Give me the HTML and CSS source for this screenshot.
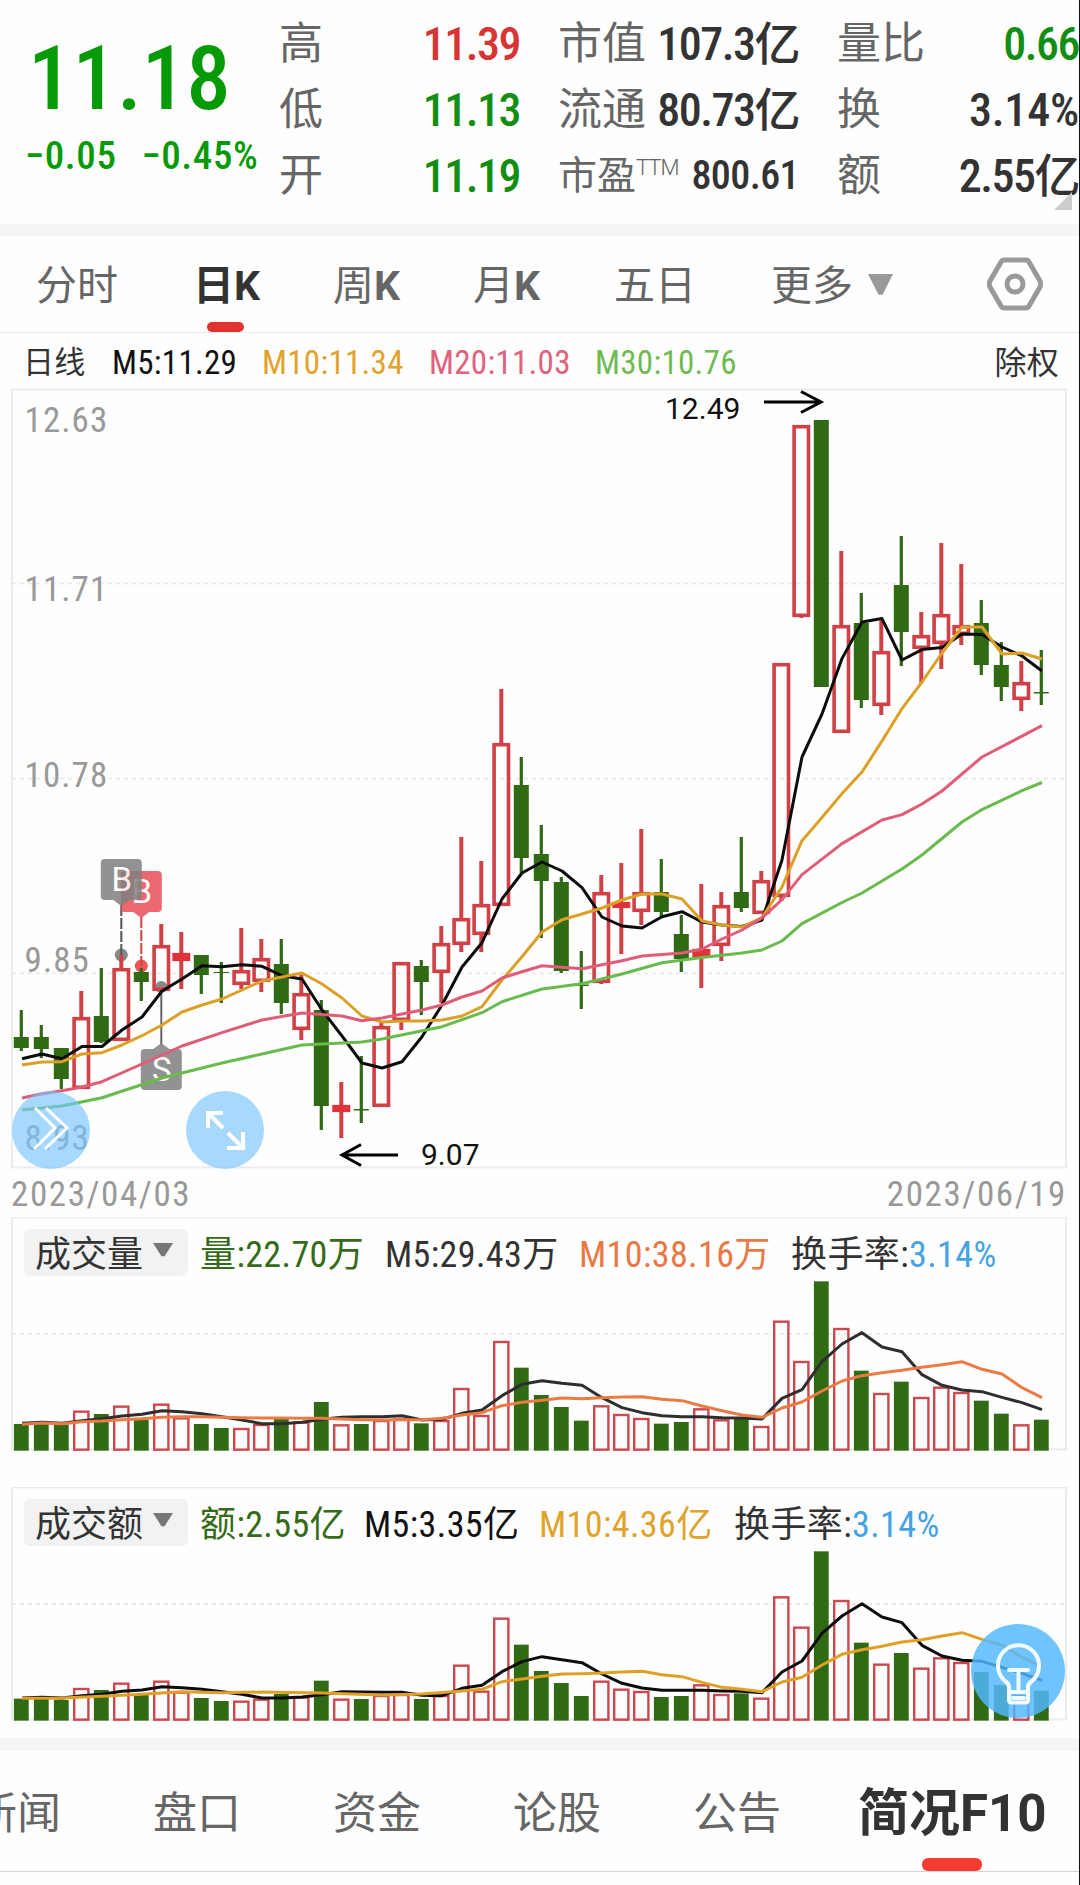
FILE: index.html
```html
<!DOCTYPE html>
<html lang="zh-CN">
<head>
<meta charset="utf-8">
<title>日K</title>
<link rel="stylesheet" href="styles.css">
</head>
<body>
<main class="screen">
  <header class="quote">
    <div class="price">
      <div class="price-now">11.18</div>
      <div class="price-change"><span>−0.05</span><span>−0.45%</span></div>
    </div>
    <dl class="stats">
      <div class="stat"><dt>高</dt><dd class="up">11.39</dd></div>
      <div class="stat"><dt>市值</dt><dd>107.3亿</dd></div>
      <div class="stat"><dt>量比</dt><dd class="down">0.66</dd></div>
      <div class="stat"><dt>低</dt><dd class="down">11.13</dd></div>
      <div class="stat"><dt>流通</dt><dd>80.73亿</dd></div>
      <div class="stat"><dt>换</dt><dd class="percent">3.14%</dd></div>
      <div class="stat"><dt>开</dt><dd class="down">11.19</dd></div>
      <div class="stat stat-small"><dt>市盈<sup>TTM</sup></dt><dd>800.61</dd></div>
      <div class="stat"><dt>额</dt><dd>2.55亿</dd></div>
    </dl>
    <i class="corner"></i>
  </header>

  <nav class="periods">
    <span class="period">分时</span>
    <span class="period active">日K</span>
    <span class="period">周<b>K</b></span>
    <span class="period">月<b>K</b></span>
    <span class="period">五日</span>
    <span class="period more">更多<i class="caret"></i></span>
    <svg class="settings" viewBox="0 0 56 54"><path d="M17 3H39Q41 3 42 5L53 24Q54.500 27 53 30L42 49Q41 51 39 51H17Q15 51 14 49L3 30Q1.500 27 3 24L14 5Q15 3 17 3Z"/><circle cx="28" cy="27" r="8"/></svg>
  </nav>

  <div class="legend">
    <span class="l-name">日线</span>
    <span class="l-m5">M5:11.29</span>
    <span class="l-m10">M10:11.34</span>
    <span class="l-m20">M20:11.03</span>
    <span class="l-m30">M30:10.76</span>
    <span class="l-adj">除权</span>
  </div>

  <section class="kline">
    <svg id="kline" viewBox="11 388 1056 781"></svg>
    <button class="round collapse"><svg viewBox="0 0 78 78"><path d="M23 17 43 37 22 58M34 17 55 37 33 58"/></svg></button>
    <button class="round expand"><svg viewBox="0 0 78 78"><path d="M37 37 22 22M37 22H22V37M42 42 57 57M41 57H57V41"/></svg></button>
  </section>
  <div class="dates"><span>2023/04/03</span><span>2023/06/19</span></div>

  <section class="panel">
    <div class="panel-head">
      <span class="pick">成交量<i class="caret"></i></span>
      <span class="v-now">量:22.70万</span>
      <span class="v-m5">M5:29.43万</span>
      <span class="v-m10">M10:38.16万</span>
      <span class="v-rate">换手率:<em>3.14%</em></span>
    </div>
    <svg id="volume" viewBox="11 1217 1056 234"></svg>
  </section>

  <section class="panel amount">
    <div class="panel-head">
      <span class="pick">成交额<i class="caret"></i></span>
      <span class="v-now">额:2.55亿</span>
      <span class="v-m5">M5:3.35亿</span>
      <span class="v-m10">M10:4.36亿</span>
      <span class="v-rate">换手率:<em>3.14%</em></span>
    </div>
    <svg id="amount" viewBox="11 1487 1056 234"></svg>
    <button class="bulb"><svg viewBox="0 0 94 94"><path d="M38 76V63Q38 60 34.500 57.500A20.500 20.500 0 1 1 60.500 57.500Q57 60 57 63V76Q57 78.500 54.500 78.500H40.500Q38 78.500 38 76M40 68H55M42 74H53M38 46H57M47.500 47V67"/></svg></button>
  </section>

  <nav class="sections">
    <span>新闻</span><span>盘口</span><span>资金</span><span>论股</span><span>公告</span><span class="active">简况F10</span>
  </nav>
</main>
<script src="chart.js"></script>
</body>
</html>
```
FILE: styles.css
```css
* { box-sizing: border-box; }
body { margin: 0; background: #fefefe; }
.screen {
  position: relative;
  width: 1080px;
  height: 1885px;
  overflow: hidden;
  border-right: 1px solid #111;
  background: #fefefe;
  color: #333;
  font-family: Roboto, "Noto Sans CJK SC", sans-serif;
  white-space: nowrap;
}
svg { display: block; }
button { border: 0; padding: 0; }

/* quote header */
.quote {
  position: relative;
  display: flex;
  height: 236px;
  border-bottom: 12px solid #f5f5f5;
}
.price { width: 279px; color: #079a07; }
.price-now {
  height: 96px;
  margin: 31px 0 0 28px;
  font-size: 89px;
  line-height: 96px;
  font-weight: 500;
  font-stretch: 75%;
}
.price-change {
  display: flex;
  gap: 25px;
  margin: 5px 0 0 25px;
  font-size: 39px;
  line-height: 48px;
  font-weight: 500;
  font-stretch: 75%;
  letter-spacing: .6px;
}
.stats {
  display: grid;
  grid-template-columns: 241px 241px 242px;
  grid-template-rows: repeat(3, 66px);
  column-gap: 38px;
  align-content: start;
  margin: 11px 0 0;
}
.stat { display: flex; justify-content: space-between; align-items: center; line-height: 66px; }
.stat dt { font-size: 44px; color: #666; }
.stat dd { margin: 0; font-size: 46px; font-weight: 500; font-stretch: 75%; letter-spacing: -1.5px; }
.stat dd.percent { letter-spacing: -.2px; }
.stat-small dt { font-size: 39px; }
.stat-small dd { font-size: 40px; letter-spacing: -.6px; }
.stat sup { font-size: 22px; line-height: 0; vertical-align: 14px; font-weight: 300; letter-spacing: -1px; }
.up { color: #d93434; }
.down { color: #128f12; }
.corner {
  position: absolute;
  right: 7px;
  bottom: 14px;
  border: 9px solid #ccc;
  border-left-color: transparent;
  border-top-color: transparent;
}
.caret { display: inline-block; background: #999; clip-path: polygon(0 0, 100% 0, 58% 94%, 42% 94%); }

/* period tabs */
.periods {
  display: flex;
  align-items: center;
  height: 97px;
  padding-left: 36px;
  border-bottom: 1px solid #e9e9e9;
  color: #666;
  font-size: 41px;
}
.period { width: 140px; height: 96px; line-height: 100px; }
.period:nth-child(1) { width: 157px; }
.period:nth-child(2) { width: 140px; }
.period b, .period.active { font-weight: 700; }
.period.active { position: relative; color: #333; }
.period.active::after {
  content: "";
  position: absolute;
  left: 14px;
  bottom: 0;
  width: 37px;
  height: 10px;
  border-radius: 5px;
  background: #e03330;
}
.period:nth-child(4) { width: 141px; }
.period:nth-child(5) { width: 157px; }
.more { width: 216px; }
.more .caret { width: 25px; height: 22px; margin: 0 0 4px 15px; }
.settings { width: 56px; height: 54px; fill: none; stroke: #999; stroke-width: 5; }

/* moving-average legend */
.legend {
  display: flex;
  height: 55px;
  padding-left: 23px;
  font-size: 33px;
  line-height: 60px;
  font-stretch: 75%;
  letter-spacing: .3px;
}
.l-name { width: 89px; font-size: 31px; }
.l-m5 { width: 150px; color: #111; }
.l-m10 { width: 167px; color: #e0a32c; }
.l-m20 { width: 166px; color: #e2617d; }
.l-m30 { color: #6fbb52; }
.l-adj { margin: 0 20px 0 auto; font-size: 32px; }

.kline { position: relative; height: 781px; padding-left: 11px; }
#kline { width: 1056px; height: 781px; }
.axis { font-size: 35px; font-stretch: 75%; letter-spacing: 1.1px; fill: #999; }
.round {
  position: absolute;
  top: 703px;
  width: 78px;
  height: 78px;
  border-radius: 50%;
  background: rgba(120, 196, 255, .65);
}
.round path { fill: none; stroke: #fff; stroke-width: 3; }
.collapse { left: 12px; }
.expand { left: 186px; }
.expand path { stroke-width: 4; }

.dates {
  display: flex;
  justify-content: space-between;
  height: 48px;
  padding: 0 12px 0 11px;
  color: #999;
  font-size: 35px;
  line-height: 51px;
  font-stretch: 75%;
  letter-spacing: 1.6px;
}

/* volume and amount panels */
.panel { position: relative; height: 270px; padding-left: 11px; }
.panel > svg { width: 1056px; height: 234px; margin-top: -59px; }
.panel-head {
  display: flex;
  height: 59px;
  padding: 12px 0 0 13px;
  font-size: 36px;
  line-height: 52px;
  font-stretch: 75%;
  letter-spacing: .4px;
}
.pick { width: 164px; height: 47px; padding-left: 11px; border-radius: 6px; background: #f2f2f2; letter-spacing: 0; }
.pick .caret { width: 20px; height: 14px; margin: 0 0 10px 10px; background: #777; }
.v-now { width: 185px; padding-left: 12px; color: #356b18; }
.v-m5 { width: 194px; margin-left: 12px; }
.v-m10 { width: 212px; color: #e97845; }
.v-rate em { color: #45a3e5; font-style: normal; }
.amount { height: 251px; }
.amount .v-now { width: 164px; }
.amount .v-m5 { width: 175px; color: #111; }
.amount .v-m10 { width: 195px; color: #e0a32c; }
.bulb {
  position: absolute;
  left: 971px;
  top: 137px;
  width: 94px;
  height: 94px;
  border-radius: 50%;
  background: rgba(82, 184, 255, .83);
}
.bulb path { fill: none; stroke: #f0faff; stroke-width: 4; stroke-linecap: round; }

/* bottom section tabs */
.sections {
  display: flex;
  height: 134px;
  border-top: 13px solid #f5f5f5;
  border-bottom: 1px solid #d5d5d5;
  color: #666;
  font-size: 44px;
  line-height: 126px;
}
.sections span { width: 180px; height: 120px; flex: none; }
.sections span:first-child { margin-left: -27px; }
.sections .active {
  position: relative;
  width: auto;
  margin-left: -15px;
  color: #333;
  font-size: 51px;
  font-weight: 700;
}
.sections .active::after {
  content: "";
  position: absolute;
  left: 64px;
  bottom: 0;
  width: 60px;
  height: 13px;
  border-radius: 6px;
  background: #f43c30;
}
```
FILE: chart.js
```js
const NS = 'http://www.w3.org/2000/svg';
const RED = '#cf4146', GREEN = '#316a15';
const x = i => 21.300 + 20 * i;

function add(svg, tag, attrs, text) {
  const el = document.createElementNS(NS, tag);
  for (const k in attrs) el.setAttribute(k, attrs[k]);
  if (text) el.textContent = text;
  svg.appendChild(el);
  return el;
}
function frame(svg, top, bottom, grid) {
  add(svg, 'rect', { x: 12, y: top, width: 1054, height: bottom - top, fill: 'none', stroke: '#ebebeb', 'stroke-width': 2 });
  grid.forEach(y => add(svg, 'path', { d: `M12 ${y}H1066`, stroke: '#ebebeb', 'stroke-width': 2, 'stroke-dasharray': '4 4' }));
}
// Each point is [index, y]; a bare number takes its place in the list as index.
function line(svg, pts, color, map = y => y) {
  const d = pts.map((p, i) => Array.isArray(p) ? p : [i, p]).map(([i, y]) => `${x(i) + 0.700},${map(y)}`).join(' ');
  add(svg, 'polyline', { points: d, fill: 'none', stroke: color, 'stroke-width': 3, 'stroke-linejoin': 'round' });
}

// Candles: direction, high, body top, body bottom, low (chart coordinates).
const candles = `G 1010 1037 1048 1051|G 1025 1037 1049 1058|G 1048 1048 1079 1089|R 991 1017 1089 1089|G 968 1016 1042 1043|R 955 968 1041 1041|G 968 972 982 1001|R 924 945 991 991|R 932 953 961 989|G 955 955 975 994|G 962 972 973 1003|R 928 970 985 989|R 939 958 982 992|G 939 964 1003 1014|R 975 993 1030 1040|G 1000 1010 1106 1130|R 1082 1105 1112 1138|G 1056 1109 1110.500 1123|R 1022 1026 1107 1107|R 962 962 1021 1030|G 960 966 982 1015|R 926 943 973 1003|R 837 918 945 952|R 861 904 935 952|R 689 743 906 906|G 757 785 858 873|G 825 854 881 938|G 877 882 971 973|G 951 984.500 986 1009|R 875 892 983 984|R 863 902 908 954|R 829 892 912 925|G 859 892 912 917|G 915 934 959 972|R 884 949 957 988|R 892 905 946 961|G 837 892 908 912|R 871 880 914 914|R 663 663 897 901|R 425 425 617 618|G 420 420 687 687|R 551 625 733 733|G 593 623 700 708|R 619 651 706 715|G 536 585 632 666|R 612 635 649 683|R 543 614 644 669|R 564 625 635 645|G 600 623 665 675|G 642 665 687 701|R 661 682 700 711|G 650 692 693.500 705`
  .split('|').map(s => s.split(' '));

const ma5 = [1058.700,1054,1058.700,1046.500,1046.500,1030,1017,991,979,965.700,966.700,964.700,966.300,975.700,979,1010,1036,1063,1068,1061.700,1036.700,1005,967,942.700,899,873,862,871,887.700,917,926,928,916.700,911.700,922,925,926.500,920,860,757,714,658.600,622,618.600,660,649.600,647.500,634,634.600,647,656,671];
const ma10 = [1065,1062,1061.700,1054,1052.700,1045,1035.700,1025,1012,1005,999,990,981,977,973,984,998,1016,1022,1021,1021,1020,1016,1006.700,980,956.700,932,919.700,914,908,900,894,894,899,921,925,927,917.500,887,840.700,817.500,793.600,772,741,708.600,682,653,627,627,654,653,659];
const ma20 = [[0,1098],[1,1093.700],[2,1090.700],[3,1087],[4,1081.700],[6,1064],[8,1046],[10,1032.700],[12,1020],[14,1013],[16,1016],[17,1020.700],[18,1018],[20,1010],[21,1005],[22,997],[23,991],[24,978],[25,971.700],[26,965.700],[28,968.700],[30,960.700],[31,956],[33,953],[34,949],[35,939],[36,930],[37,918],[38,899.600],[39,874.600],[41,843.600],[43,820],[44,814.600],[45,804],[46,791],[48,757],[51,725.700]];
const ma30 = [[0,1110],[2,1106],[4,1097.700],[7,1078],[10,1063],[12,1054],[14,1045],[17,1042],[18,1039],[21,1026.700],[23,1012.700],[24,1001.700],[26,989],[28,983.700],[30,974],[32,962.700],[34,957.600],[36,953],[37,950],[38,941],[39,923.600],[41,902.500],[42,893],[44,869],[45,855],[47,822],[48,809.600],[50,790.700],[51,782.500]];

const k = document.getElementById('kline');
frame(k, 389.500, 1167.500, [583.500, 778.500, 973.500]);
[['12.63', 432], ['11.71', 601], ['10.78', 787], ['9.85', 972], ['8.93', 1150]].forEach(([t, y]) =>
  add(k, 'text', { x: 24.500, y, class: 'axis' }, t));

add(k, 'circle', { cx: 121.300, cy: 955, r: 6.500, fill: '#888' });
add(k, 'circle', { cx: 141.300, cy: 966, r: 6.500, fill: '#e55' });
add(k, 'circle', { cx: 161.300, cy: 987, r: 6, fill: '#888' });
candles.forEach(([dir, hi, top, bot, lo], i) => {
  [hi, top, bot, lo] = [hi, top, bot, lo].map(Number);
  const c = x(i);
  if (dir === 'G') {
    add(k, 'path', { d: `M${c} ${hi}V${lo}`, stroke: GREEN, 'stroke-width': 3.200 });
    add(k, 'rect', { x: c - 7.500, y: top, width: 15, height: bot - top, fill: GREEN });
  } else {
    add(k, 'path', { d: `M${c} ${hi}V${top}M${c} ${bot}V${lo}`, stroke: RED, 'stroke-width': 4 });
    const solid = bot - top < 9;
    add(k, 'rect', { x: c - 7.200, y: top + 1.700, width: 14.400, height: bot - top - 3.400, fill: solid ? '#e03238' : 'none', stroke: solid ? '#e03238' : RED, 'stroke-width': 3.600 });
  }
});

function flag(cx, y, color, letter, up) {
  const tip = up ? `M${cx - 8} ${y}L${cx} ${y - 6}L${cx + 8} ${y}Z` : `M${cx - 8} ${y + 41}L${cx} ${y + 47}L${cx + 8} ${y + 41}Z`;
  const g = add(k, 'g', { opacity: 0.850 });
  add(g, 'rect', { x: cx - 20.500, y, width: 41, height: 41, rx: 4, fill: color });
  add(g, 'path', { d: tip, fill: color });
  add(g, 'text', { x: cx + 0.500, y: y + 32, 'font-size': 33, fill: '#fff', 'text-anchor': 'middle' }, letter);
}
add(k, 'path', { d: 'M141.300 917V966', stroke: '#c44', 'stroke-width': 2, 'stroke-dasharray': '11 2' });
add(k, 'path', { d: 'M121.300 905V955', stroke: '#555', 'stroke-width': 2, 'stroke-dasharray': '11 2' });
add(k, 'path', { d: 'M161.300 990V1045', stroke: '#666', 'stroke-width': 2 });
flag(141.300, 871, '#e84f55', 'B', false);
flag(121.300, 859, '#808080', 'B', false);
flag(161.300, 1049, '#808080', 'S', true);

line(k, ma5, '#0c0c0c');
line(k, ma10, '#dda027');
line(k, ma20, '#e05d78');
line(k, ma30, '#68bb4c');

add(k, 'path', { d: 'M764 402H820M801 391.500L821 402L801 412.500M398 1155H343M361 1144.500L342 1155L361 1165.500', fill: 'none', stroke: '#000', 'stroke-width': 3 });
add(k, 'text', { x: 665, y: 419, 'font-size': 30, fill: '#111' }, '12.49');
add(k, 'text', { x: 421, y: 1165, 'font-size': 30, fill: '#111' }, '9.07');

// Bars share the candle directions; values are thirds of a pixel below the panel origin.
function bars(id, origin, frameTop, tops, m5, m5Color, m10, m10Color) {
  const svg = document.getElementById(id);
  const map = v => origin + v / 3;
  frame(svg, frameTop, frameTop + 232, [origin + 134]);
  tops.forEach((v, i) => {
    const c = x(i), y = map(v), base = map(752);
    if (candles[i][0] === 'G') add(svg, 'rect', { x: c - 7.400, y, width: 14.800, height: base - y, fill: GREEN });
    else add(svg, 'rect', { x: c - 7.100, y: y + 1, width: 14.200, height: base - y - 2, fill: 'none', stroke: '#cb484e', 'stroke-width': 2.400 });
  });
  line(svg, m5, m5Color, map);
  line(svg, m10, m10Color, map);
}
bars('volume', 1200, 1217.500,
  [672,672,674,632,642,617,660,611,652,672,684,684,672,655,665,606,673,672,660,655,670,660,564,645,423,503,585,621,662,616,642,654,671,666,625,658,655,678,362,483,244,384,512,579,545,591,560,576,602,641,673,659],
  [670,667,670,662,656,648,643,632,635,641,650,660,671,671,667,658,652,650,650,647,660,658,640,630,587,553,542,550,556,593,623,638,647,650,650,653,654,657,595,569,485,432,398,441,455,524,556,570,575,592,608,629], '#2e2e2e',
  [673,669,671,665,663,659,656,652,650,650,652,653,654,654,655,655,657,659,660,659,659,655,645,638,617,607,601,594,596,593,591,590,598,602,618,632,645,652,624,606,573,543,527,518,511,502,494,485,508,522,563,593], '#ec7a45');
bars('amount', 1470, 1487.500,
  [686,686,690,654,660,638,675,632,665,684,693,692,686,672,680,632,686,687,675,672,687,675,584,662,443,524,603,639,678,632,656,663,681,678,643,672,670,683,379,470,244,390,518,581,549,593,562,576,606,645,676,662],
  [684,682,684,677,673,664,660,650,653,658,665,673,684,684,681,674,665,666,667,667,676,677,655,646,605,575,560,569,578,612,640,654,661,661,661,663,664,668,606,573,490,438,401,441,458,526,558,571,574,592,610,631], '#0c0c0c',
  [[0,685],[2,684],[4,679],[6,673],[8,665],[10,668],[12,666],[15,669],[18,675],[20,672],[22,663],[23,658],[24,635],[25,627],[26,619],[27,612],[28,611],[29,609],[30,606],[31,604],[32,614],[33,620],[34,637],[35,652],[36,658],[37,665],[38,636],[39,622],[40,585],[41,553],[42,539],[43,529],[44,516],[45,509],[46,498],[47,488],[48,508],[49,526],[50,562],[51,590]], '#e0a025');
```
